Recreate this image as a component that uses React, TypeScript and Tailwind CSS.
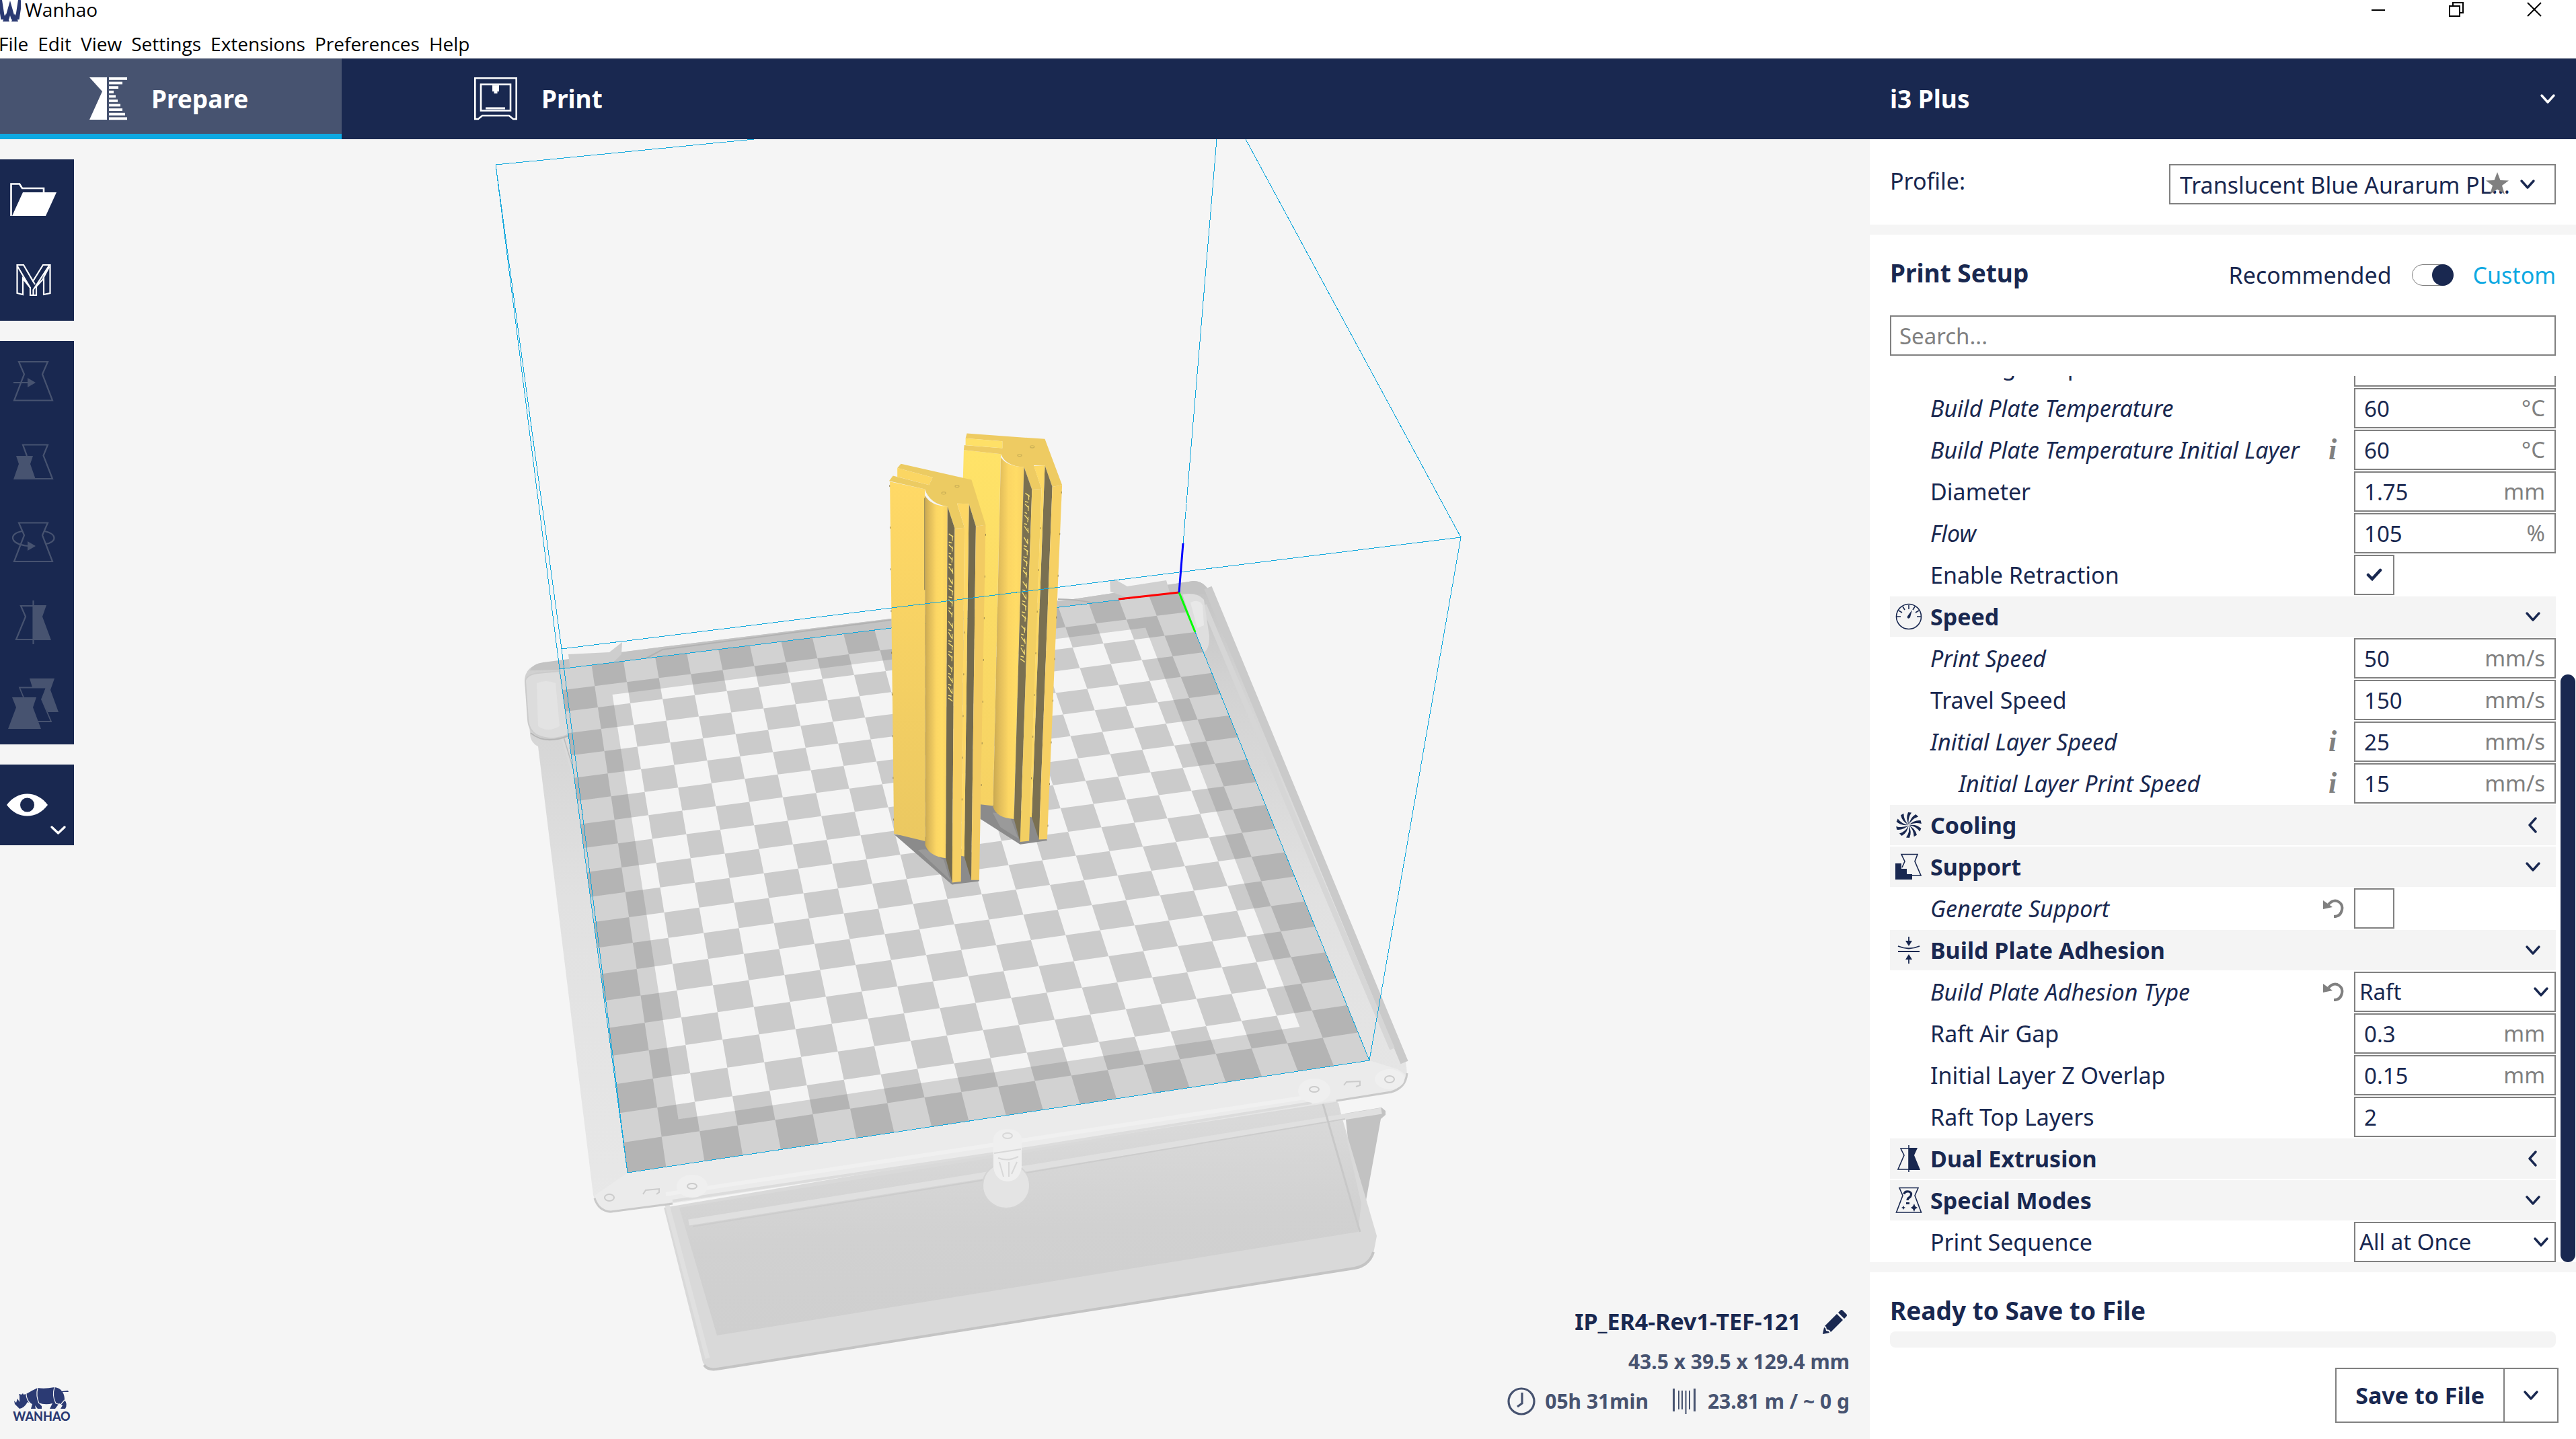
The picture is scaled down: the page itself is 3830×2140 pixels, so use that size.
import React from "react";

const NAVY = "#192850";

/* ---------- small shared glyphs ---------- */

function Chevron({ dir = "down", className = "" }: { dir?: "down" | "left"; className?: string }) {
  return (
    <svg viewBox="0 0 24 24" className={`size-6 shrink-0 ${className}`} fill="none" stroke="currentColor" strokeWidth="3.4" strokeLinecap="round" strokeLinejoin="round" aria-hidden="true">
      {dir === "down" ? <path d="M3 7 L12 17 L21 7" /> : <path d="M16 2 L7 12 L16 22" />}
    </svg>
  );
}

/* ---------- title bar and menu ---------- */

const menus = ["File", "Edit", "View", "Settings", "Extensions", "Preferences", "Help"];

function WindowFrame() {
  return (
    <div className="shrink-0 bg-white text-black font-['Open_Sans','Noto_Sans',sans-serif] text-[28px]">
      <div className="flex h-11 items-start justify-between">
        <div className="flex items-start gap-1.5">
          <svg viewBox="0 0 31 34" className="h-[34px] w-[31px]" aria-hidden="true">
            <path d="M0 0 L4 26 L11 26 L15 12 L19 26 L26 26 L30 0" fill="none" stroke="#2b3a73" strokeWidth="6" />
            <path d="M4 32 L9 20 L14 32Z M17 32 L22 20 L27 32Z" fill="#2b3a73" />
          </svg>
          <span className="leading-7">Wanhao</span>
        </div>
        <div className="flex h-7 pr-1">
          {["Minimize", "Restore", "Close"].map((name) => (
            <button key={name} aria-label={name} className="flex w-[116px] items-center justify-center">
              <svg viewBox="0 0 22 22" className="size-[22px]" fill="none" stroke="#000" strokeWidth="2" aria-hidden="true">
                {name === "Minimize" && <path d="M1 12 H21" />}
                {name === "Restore" && <path d="M1 6 H16 V21 H1Z M6 6 V1 H21 V16 H16" />}
                {name === "Close" && <path d="M1 1 L21 21 M21 1 L1 21" />}
              </svg>
            </button>
          ))}
        </div>
      </div>
      <nav className="-ml-0.5 flex h-[43px] items-center gap-[14px] border-b border-[#e8e8e8] leading-10">
        {menus.map((m) => (
          <button key={m} className="leading-10">
            {m}
          </button>
        ))}
      </nav>
    </div>
  );
}

/* ---------- stage bar ---------- */

const sliceBars = [27, 20, 14, 7, 10, 13, 17, 20, 24, 27];

function StageBar() {
  return (
    <header className="flex h-[120px] shrink-0 bg-[#192850] text-[37px] font-bold text-white">
      <button className="flex w-[508px] items-center border-b-8 border-[#0ea9e2] bg-[#475370] pt-2 pl-[133px]">
        <svg viewBox="0 0 56 64" className="h-16 w-14" fill="#fff" aria-hidden="true">
          <path d="M0 0 H26 V63 H0 L19 21Z" />
          {sliceBars.map((w, i) => (
            <rect key={i} x="29" y={i * 6.6} width={w} height="3.8" />
          ))}
        </svg>
        <span className="pl-9">Prepare</span>
      </button>
      <button className="flex items-center pl-[197px]">
        <svg viewBox="0 0 64 64" className="size-16" fill="none" stroke="#fff" strokeWidth="2.6" aria-hidden="true">
          <path d="M1.3 1.3 H62.7 V62 L58 62 L52 57 H12 L6 62 H1.3Z" />
          <path d="M10 10.5 H54 V49.5 H10Z" />
          <path d="M27 12 H37 V21 H34.500 V24 H29.500 V21 H27Z" fill="#fff" stroke="none" />
          <path d="M17 46 H46" strokeWidth="3" />
        </svg>
        <span className="pl-9">Print</span>
      </button>
      <button className="ml-auto flex w-[1050px] items-center justify-between pr-[30px] pl-[30px]">
        i3 Plus
        <Chevron />
      </button>
    </header>
  );
}

/* ---------- left tool column ---------- */

const toolStroke = { fill: "none", stroke: "#475370", strokeWidth: 2.2 };

function ToolButton({ label, children, disabled }: { label: string; children: React.ReactNode; disabled?: boolean }) {
  return (
    <button aria-label={label} disabled={disabled} className="block h-[120px] w-[110px] bg-[#192850]">
      <svg viewBox="0 0 110 120" className="size-full" aria-hidden="true">
        {children}
      </svg>
    </button>
  );
}

function Toolbar() {
  return (
    <div className="relative flex w-[110px] flex-col gap-[30px] pt-[30px]">
      <div>
        <ToolButton label="Open File">
          <path d="M16.500 84 V36.500 H29 L33 43 H65 V50" fill="none" stroke="#fff" strokeWidth="2.6" />
          <path d="M34 49 H84 L68 84 H18Z" fill="#fff" />
        </ToolButton>
        <ToolButton label="Marketplace">
          <path
            d="M25.500 37 H35 L49 61 L64 37 H74.500 V79 L65 81 V57 L54 69 V82 H45 V71 L34 57 V81 L25.500 79Z M26 39 L45 71 M73 38 L49.500 74 V82 M49 61 L52 66 M64 57 L73 40"
            fill="none"
            stroke="#fff"
            strokeWidth="2.2"
          />
        </ToolButton>
      </div>
      <div>
        <ToolButton label="Move" disabled>
          <path d="M28 31 H71 L63 49.500 L78 88.500 H21 L36 49.500Z M20 62 H42" {...toolStroke} />
          <path d="M41 55 L53 62 L41 69Z" fill="#475370" />
        </ToolButton>
        <ToolButton label="Scale" disabled>
          <path d="M40 51 L34 34.500 H71 L64.500 50.500 L78 85 H52" {...toolStroke} />
          <path d="M24 51 H49 L45 63 L53 86 H20 L28 63Z" fill="#475370" />
        </ToolButton>
        <ToolButton label="Rotate" disabled>
          <path d="M28 30.500 H71 L63 49 L78 88 H21 L36 49Z M33 43 C13 46 13 62 42 65 M66 43 C85 47 85 59 68 62" {...toolStroke} />
          <path d="M41 58 L53 65 L41 72Z" fill="#475370" />
        </ToolButton>
        <ToolButton label="Mirror" disabled>
          <path d="M49 34 H31 L38 50 L24 84 H49 M49.500 26 V91" {...toolStroke} />
          <path d="M49 33 H69 L63 50 L76 85 H49Z" fill="#475370" />
        </ToolButton>
        <ToolButton label="Multiply" disabled>
          <path d="M35 50 L29 35.500 H69 L62 53 L76 86 H56" {...toolStroke} strokeWidth={1.8} />
          <path d="M44 22 H81 L75 39 L87 72 H71 L62 54 L68 35 H48Z M18 50 H54 L49 65 L61 97 H12 L24 65Z" fill="#475370" />
        </ToolButton>
      </div>
      <ToolButton label="View Mode">
        <path d="M10 60 C26 38 55 38 71 60 C55 82 26 82 10 60Z" fill="#fff" />
        <circle cx="40.500" cy="60" r="10.500" fill={NAVY} />
        <path d="M77 93 L86.500 102 L96 93" fill="none" stroke="#fff" strokeWidth="3.4" strokeLinecap="round" strokeLinejoin="round" />
      </ToolButton>
    </div>
  );
}

/* ---------- 3D scene ---------- */

type P = [number, number];

const bedBackRight: P = [1753, 881];
const bedBackLeft: P = [832, 995];
const bedFrontLeft: P = [933, 1744];
const bedFrontRight: P = [2036, 1577];
const CELLS = 20;

/* Maps bed coordinates (0..20 on each axis) to scene points by a projective transform. */
function makeProjector(p0: P, p1: P, p2: P, p3: P) {
  const dx1 = p1[0] - p2[0];
  const dx2 = p3[0] - p2[0];
  const sx = p0[0] - p1[0] + p2[0] - p3[0];
  const dy1 = p1[1] - p2[1];
  const dy2 = p3[1] - p2[1];
  const sy = p0[1] - p1[1] + p2[1] - p3[1];
  const det = dx1 * dy2 - dx2 * dy1;
  const g = (sx * dy2 - dx2 * sy) / det;
  const h = (dx1 * sy - sx * dy1) / det;
  const a = p1[0] - p0[0] + g * p1[0];
  const b = p3[0] - p0[0] + h * p3[0];
  const d = p1[1] - p0[1] + g * p1[1];
  const e = p3[1] - p0[1] + h * p3[1];
  return (i: number, j: number) => {
    const u = i / CELLS;
    const v = j / CELLS;
    const w = g * u + h * v + 1;
    return `${((a * u + b * v + p0[0]) / w).toFixed(1)} ${((d * u + e * v + p0[1]) / w).toFixed(1)}`;
  };
}

const project = makeProjector(bedBackRight, bedBackLeft, bedFrontLeft, bedFrontRight);
const quad = (i0: number, j0: number, i1: number, j1: number) =>
  `M${project(i0, j0)}L${project(i1, j0)}L${project(i1, j1)}L${project(i0, j1)}Z`;

let darkCells = "";
for (let i = 0; i < CELLS; i++) {
  for (let j = 0; j < CELLS; j++) {
    if ((i + j) % 2 === 0) darkCells += quad(i, j, i + 1, j + 1);
  }
}

/* Engraved lettering along a blade: a jittery run of short strokes. */
function engraving(x0: number, y0: number, x1: number, y1: number) {
  let d = "";
  const n = 46;
  for (let k = 0; k < n; k++) {
    if (k % 12 === 11) continue;
    const t = k / n;
    const x = x0 + (x1 - x0) * t;
    const y = y0 + (y1 - y0) * t;
    const s = ((k * 7) % 5) - 2;
    d += k % 3 === 0 ? `M${x} ${y}l${15 - s} ${14 + s * 2}` : k % 3 === 1 ? `M${x + 14} ${y - 6}l${-s} 16` : `M${x} ${y + 3}l${11 + s} 3`;
  }
  return d;
}

function Model() {
  return (
    <g transform="translate(1250 600) scale(.3827 .4847)">
      <path d="M543 1225 V1275 L697 1353 L802 1341 L770 1260Z M207 1322 L432 1476 L538 1466 L520 1380 L330 1330Z" fill="#8b8b8b" />
      <path d="M590 1255 L655 1262 L690 1335 L620 1300Z M300 1370 L330 1368 L400 1400 L425 1462Z" fill="#9a9a9a" />

      <path d="M478 143 L622 155 L592 1235 L543 1230 L556 380 L475 230Z" fill="url(#faceR)" />
      <path d="M478 143 L480 128 L628 137 V116 L485 107 L490 92 L793 109 L860 250 L822 256 L793 190 H750 L780 262 L743 264 L712 195 Q640 192 622 155Z" fill="#eecb62" />
      <path d="M485 107 L628 116 V137 L485 128Z" fill="#fee067" />
      <path d="M622 165 Q645 193 712 195 L673 1275 Q605 1272 592 1238Z" fill="url(#cyl)" />
      <path d="M712 195 L743 264 L697 1345 L673 1275Z M793 190 L822 256 L770 1338 L742 1270Z" fill="#7a7051" />
      <path d="M743 264 L780 262 L732 1342 L697 1345Z" fill="#f2cf62" />
      <path d="M750 192 L793 190 L742 1270 L734 1268 L780 262Z" fill="#fdd965" />
      <path d="M822 256 L860 250 L802 1337 L770 1338Z" fill="#f6d064" />

      <path d="M191 240 L327 263 L328 1343 L207 1320Z" fill="url(#faceL)" />
      <path d="M188 238 L203 222 L343 250 L357 227 L220 198 L234 185 L508 234 L563 373 L525 377 L498 308 L452 307 L481 381 L443 384 L415 316 Q345 308 327 263Z" fill="#eccb62" />
      <path d="M220 198 L357 227 L343 250 L220 225Z" fill="#fbd663" />
      <path d="M327 282 Q350 314 415 316 L408 1395 Q345 1390 328 1355Z" fill="url(#cyl)" />
      <path d="M415 316 L443 384 L433 1470 L408 1395Z M498 308 L525 377 L507 1462 L480 1390Z" fill="#736a4e" />
      <path d="M443 384 L481 381 L467 1467 L433 1470Z" fill="#f6d064" />
      <path d="M452 307 L498 308 L480 1390 L468 1388 L481 381Z" fill="#fdd765" />
      <path d="M525 377 L563 373 L538 1462 L507 1462Z" fill="#f2cb62" />

      <g fill="#fbdc66" stroke="#cdb057" strokeWidth="3">
        <ellipse cx="400" cy="275" rx="8" ry="3" />
        <ellipse cx="452" cy="254" rx="8" ry="3" />
        <ellipse cx="695" cy="159" rx="8" ry="3" />
        <ellipse cx="744" cy="133" rx="8" ry="3" />
      </g>
      <g fill="none" stroke="#fbe274" strokeWidth="3">
        <path d={engraving(420, 400, 418, 915)} />
        <path d={engraving(717, 275, 698, 795)} />
      </g>
      <g fill="none" stroke="#8a7a4a" strokeWidth="2" strokeDasharray="6 122">
        <path d="M190 250 L206 1310 M563 400 L545 1240 M480 700 L470 1290 M858 270 L803 1330 M775 380 L736 1260" />
      </g>
      <path d="M326 290 V572" stroke="#8f8256" strokeWidth="3" />
    </g>
  );
}

function Scene() {
  return (
    <svg viewBox="0 207 2780 1933" preserveAspectRatio="xMinYMin slice" className="absolute inset-0 size-full" role="img" aria-label="Build plate with two models">
      <defs>
        <linearGradient id="faceL" x1="0" y1="0" x2="0" y2="1">
          <stop offset="0" stopColor="#ffd966" />
          <stop offset="1" stopColor="#ebc861" />
        </linearGradient>
        <linearGradient id="faceR" x1="0" y1="0" x2="0" y2="1">
          <stop offset="0" stopColor="#ffe368" />
          <stop offset="1" stopColor="#f6d263" />
        </linearGradient>
        <linearGradient id="cyl">
          <stop offset="0" stopColor="#c9a850" />
          <stop offset=".2" stopColor="#e0bc5a" />
          <stop offset=".5" stopColor="#fcd664" />
          <stop offset=".75" stopColor="#ffdc66" />
          <stop offset="1" stopColor="#f9d364" />
        </linearGradient>
        <linearGradient id="side" x1="0" y1="0" x2="0" y2="1">
          <stop offset="0" stopColor="#c3c3c3" />
          <stop offset=".16" stopColor="#d2d2d2" />
          <stop offset=".5" stopColor="#e1e1e1" />
          <stop offset="1" stopColor="#e8e8e8" />
        </linearGradient>
        <linearGradient id="drawer" x1="0" y1="0" x2=".15" y2="1">
          <stop offset="0" stopColor="#dddddd" />
          <stop offset=".6" stopColor="#d1d1d1" />
          <stop offset="1" stopColor="#cfcfcf" />
        </linearGradient>
      </defs>

      {/* storage drawer under the plate */}
      <path d="M2000 1656 L2054 1647 L2060 1652 V1658 L2053 1664 L2031 1785 L2019 1834Z" fill="#c2c2c2" />
      <path d="M987 1796 L1985 1627 L2031 1783 L2047 1838 L2042 1864 Q2036 1884 2010 1888 L1066 2037 Q1050 2038 1045 2026Z" fill="#d9d9d9" />
      <path d="M1010 1796 L1990 1640 L2024 1790 L2019 1832 L1450 1924 L1066 1986Z" fill="url(#drawer)" />
      <path d="M1047 2030 Q1052 2038 1066 2036 L2014 1886 Q2036 1882 2042 1862" fill="none" stroke="#c4c4c4" strokeWidth="4" />
      <path d="M1024 1818 L1450 1750 L2054 1652" fill="none" stroke="#e0e0e0" strokeWidth="9" />
      <path d="M1030 1824 L1450 1757 L2000 1664" fill="none" stroke="#cccccc" strokeWidth="2" />
      <path d="M1955 1600 L2022 1832" fill="none" stroke="#c8c8c8" strokeWidth="3" />
      <path d="M985 1765 L1052 2020" fill="none" stroke="#e0e0e0" strokeWidth="7" />

      {/* plate body */}
      <path
        d="M780 1013 Q780 990 808 986 L906 972 L985 962 L1325 920 L1596 891 L1774 864 Q1792 864 1800 884 L1850 1000 L1990 1340 L2016 1400 L2090 1580 Q2098 1618 2068 1626 L906 1804 Q888 1800 882 1777 L800 1110 Q788 1104 788 1090Z"
        fill="url(#side)"
      />
      <path d="M788 997 Q792 987 808 985 L985 962 L1325 920 L1596 891 L1774 864 Q1792 864 1800 884 L1753 882 L832 996Z" fill="#c3c3c3" />
      <path d="M953 983 L985 966 L1325 922 M1573 891 Q1600 891 1627 897" fill="none" stroke="#b2b2b2" strokeWidth="2" />
      <path d="M1796 874 L2088 1580" fill="none" stroke="#cacaca" strokeWidth="12" />
      <path d="M1790 900 L2070 1560" fill="none" stroke="#d6d6d6" strokeWidth="8" />
      <path d="M822 1040 L878 1230" fill="none" stroke="#dadada" strokeWidth="9" />
      <path d="M820 1036 L880 1236" fill="none" stroke="#bdbdbd" strokeWidth="1.500" />
      <path d="M933 1744 L2036 1577 L2078 1590 L2092 1600 Q2092 1620 2068 1624 L906 1802 Q890 1796 884 1778Z" fill="#ebebeb" />
      <path d="M1000 1786 L1500 1712 L1950 1640" fill="none" stroke="#dcdcdc" strokeWidth="4" />
      <path d="M990 1776 L1480 1702 L1940 1632" fill="none" stroke="#f0f0f0" strokeWidth="6" />
      <path d="M884 1782 Q890 1801 908 1802 L1000 1790 M1987 1637 L2068 1624 Q2090 1618 2092 1596" fill="none" stroke="#c9c9c9" strokeWidth="3" />

      {/* corner foot and clips */}
      <path d="M781 1012 Q784 1003 800 1001 L832 998 L846 1092 Q820 1104 798 1093 Q786 1086 785 1070Z" fill="#dcdcdc" stroke="#cbcbcb" strokeWidth="2" />
      <path d="M798 1016 Q812 1010 826 1016 L832 1080 Q814 1090 800 1080Z" fill="#e3e3e3" />
      <path d="M789 1090 Q810 1108 846 1094" fill="none" stroke="#b6b6b6" strokeWidth="2" />
      <path d="M845 973 L906 970 L925 955 L924 973 L906 991 L848 996Z" fill="#cecece" />
      <path d="M1650 863 L1660 863 L1676 872 L1734 863 L1740 884 L1680 890 L1651 880Z" fill="#d0d0d0" />
      <path d="M1758 884 Q1780 880 1790 892 L1798 946 Q1798 966 1790 970 L1777 940Z" fill="#dedede" />
      <path d="M1770 896 Q1782 890 1788 900 L1790 930 L1780 934Z" fill="#e8e8e8" />

      {/* checkered plate */}
      <path d={quad(0, 0, CELLS, CELLS)} fill="#f4f4f4" />
      <path d={darkCells} fill="#cbcbcb" />
      <path d={quad(0, 0, CELLS, CELLS) + quad(1.5, 1.5, CELLS - 1.5, CELLS - 1.5)} fillRule="evenodd" fill="#767676" fillOpacity=".27" />

      {/* front hardware */}
      <g fill="#efefef">
        <ellipse cx="1029" cy="1764" rx="23" ry="17" />
        <ellipse cx="1954" cy="1622" rx="24" ry="18" />
        <ellipse cx="2066" cy="1605" rx="22" ry="15" />
      </g>
      <g fill="none" stroke="#cbcbcb" strokeWidth="2">
        <ellipse cx="906" cy="1781" rx="7" ry="5" />
        <ellipse cx="1029" cy="1764" rx="7" ry="4" />
        <ellipse cx="1954" cy="1620" rx="7" ry="4" />
        <ellipse cx="2066" cy="1605" rx="7" ry="5" />
        <path d="M956 1776 L960 1770 L980 1768 V1773 L976 1776" />
        <path d="M1998 1614 L2002 1609 L2022 1608 V1614 L2016 1616" />
      </g>
      <ellipse cx="1496" cy="1763" rx="35" ry="34" fill="#e4e4e4" stroke="#d4d4d4" strokeWidth="2" />
      <path d="M1477 1694 Q1478 1680 1498 1679 Q1518 1680 1519 1694 V1736 Q1516 1756 1498 1757 Q1480 1756 1477 1736Z" fill="#efefef" />
      <g fill="none" stroke="#d8d8d8" strokeWidth="2">
        <ellipse cx="1498" cy="1689" rx="7" ry="4" />
        <path d="M1478 1715 L1518 1709 M1484 1722 Q1498 1728 1514 1720 M1486 1728 L1492 1750 M1500 1728 V1750 M1512 1728 L1504 1746" />
      </g>

      {/* build volume behind the models */}
      <g fill="none" stroke="#12a7dc" strokeWidth="1" shapeRendering="crispEdges">
        <path d="M1753 881 L832 995 L933 1744 L2036 1577 Z" />
        <path d="M832 995 L737 245 L1121 207 M1753 881 L1809 207" />
      </g>
      <Model />
      <g fill="none" stroke="#12a7dc" strokeWidth="1" shapeRendering="crispEdges">
        <path d="M933 1744 L835 965 L737 245 M835 965 L2172 799 L2036 1577 M2172 799 L1852 207" />
      </g>
      <g fill="none" strokeWidth="3">
        <path d="M1753 881 L1663 891" stroke="#f00" />
        <path d="M1753 881 L1777 940" stroke="#0f0" />
        <path d="M1753 881 L1759 808" stroke="#00f" />
      </g>
    </svg>
  );
}

function Logo() {
  return (
    <div className="relative mb-6 ml-5 flex w-[84px] flex-col items-center text-[#2b3a73]">
      <svg viewBox="0 0 82 34" className="h-[34px] w-[82px]" aria-hidden="true">
        <path
          d="M0 21 L3 24 L5 18 L8 23 L8 14 L7 11 L11 12 L13 10 L14 12 L18 11 Q26 6 35 2 Q45 4 60 1 Q68 2 71 7 L80 6 L81 8 L72 8 Q75 13 75 20 Q80 26 76 33 H69 L72 28 L67 25 L61 33 H53 L57 25 Q46 28 36 24 L41 29 V33 H35 L31 28 L32 33 H25 L27 26 L20 23 Q15 32 8 33 L1 26Z"
          fill="currentColor"
        />
        <path d="M18 11 Q18 20 25 26 M35 2 Q32 14 37 25 M60 1 Q56 14 62 25 L69 27 L75 20" fill="none" stroke="#f5f5f5" strokeWidth="1.200" />
      </svg>
      <span className="font-['Lato',sans-serif] text-[18px] leading-5 font-black">WANHAO</span>
    </div>
  );
}

function JobInfo() {
  return (
    <div className="relative flex flex-col items-end pr-[30px] pb-[27px] text-[30px] leading-[59px] font-bold text-[#475370]">
      <div className="flex items-center gap-8 pr-1 text-[34px] text-[#192850]">
        IP_ER4-Rev1-TEF-121
        <button aria-label="Rename job">
          <svg viewBox="0 0 36 36" className="size-9" fill="currentColor" aria-hidden="true">
            <path d="M26 1 Q28 -1 30 1 L35 6 Q37 8 35 10 L32 13 L23 4Z M21 6 L30 15 L12 33 L10 30 L6 29 L5 25 L3 24Z M2 26 L4 27 L5 31 L9 32 L10 34 L0 36Z" />
          </svg>
        </button>
      </div>
      <div>43.5 x 39.5 x 129.4 mm</div>
      <div className="flex items-center">
        <svg viewBox="0 0 42 42" className="size-[42px]" fill="none" stroke="currentColor" strokeWidth="3.200" aria-hidden="true">
          <circle cx="21" cy="21" r="19" />
          <path d="M22 8 V24 L15 29" />
        </svg>
        <span className="pl-[14px]">05h 31min</span>
        <svg viewBox="0 0 34 40" className="mr-[18px] ml-9 h-10 w-[34px]" fill="none" stroke="currentColor" aria-hidden="true">
          <path d="M1.500 1 V35 M32.500 1 V35" strokeWidth="3" />
          <path d="M9 4 V32 M14 4 V32 M19.500 4 V39 M25 4 V32" strokeWidth="2" />
        </svg>
        <span>23.81 m / ~ 0 g</span>
      </div>
    </div>
  );
}

/* ---------- settings panel ---------- */

const catIcons: Record<string, React.ReactNode> = {
  Speed: (
    <g fill="none" stroke={NAVY} strokeWidth="1.600">
      <circle cx="20" cy="20" r="18.500" />
      <path d="M20 3 V9 M2 20 H8 M32 20 H38 M11 5 L14 10 M29 5 L26 10 M5 11 L10 14 M35 11 L30 14" />
      <path d="M25 10 L22 21 Q20 24 18 22 Q17 20 19 18Z" fill={NAVY} stroke="none" />
    </g>
  ),
  Cooling: (
    <g fill={NAVY}>
      {[0, 36, 72, 108, 144, 180, 216, 252, 288, 324].map((a) => (
        <path key={a} transform={`rotate(${a} 20 20)`} d="M20 19.500 Q15 10 19 1 L24 1.500 Q18 10 20 19.500Z" />
      ))}
    </g>
  ),
  Support: (
    <g>
      <path d="M10 21 L14 12 L9 1.500 H33 L29 12 L38 33 H24" fill="none" stroke={NAVY} strokeWidth="1.600" />
      <path d="M0 15 H9 V23 H17 V31 H25 V39 H0Z" fill={NAVY} />
    </g>
  ),
  "Build Plate Adhesion": (
    <g>
      <path d="M20 0 V9 M4 14 Q20 21 36 14 M4 22 H36 M20 31 V40" fill="none" stroke={NAVY} strokeWidth="1.800" />
      <path d="M15 6 H25 L20 14Z M15 34 H25 L20 26Z" fill={NAVY} />
    </g>
  ),
  "Dual Extrusion": (
    <g>
      <path d="M20 5 H8 L13 15 L4 36 H20 M20 0 V40" fill="none" stroke={NAVY} strokeWidth="1.600" />
      <path d="M20 4 H33 L28 15 L37 37 H20Z" fill={NAVY} />
    </g>
  ),
  "Special Modes": (
    <g>
      <path d="M6 1.500 H34 L29 13 L38.500 38 H1.500 L11 13Z" fill="none" stroke={NAVY} strokeWidth="1.600" />
      <path d="M13 11 Q14 6 20 7 Q26 9 22 15 Q18 17 18 20" fill="none" stroke={NAVY} strokeWidth="3.200" />
      <path d="M16 23 H21 V26 H16Z M28 25 L29.500 29 L33 31 L29.500 33 L28 37 L26 33 L23 31 L26 29Z M12 28 L13 30 L15 31 L13 32 L12 34 L11 32 L9 31 L11 30Z" fill={NAVY} />
    </g>
  ),
};

type Setting = {
  label: string;
  value?: string;
  unit?: string;
  kind?: "check" | "select" | "category";
  italic?: boolean;
  indent?: boolean;
  info?: boolean;
  reset?: boolean;
  on?: boolean;
};

const settings: Setting[] = [
  { label: "Printing Temperature", value: "210", unit: "°C", info: true },
  { label: "Build Plate Temperature", value: "60", unit: "°C", italic: true },
  { label: "Build Plate Temperature Initial Layer", value: "60", unit: "°C", italic: true, info: true },
  { label: "Diameter", value: "1.75", unit: "mm" },
  { label: "Flow", value: "105", unit: "%", italic: true },
  { label: "Enable Retraction", kind: "check", on: true },
  { label: "Speed", kind: "category", on: true },
  { label: "Print Speed", value: "50", unit: "mm/s", italic: true },
  { label: "Travel Speed", value: "150", unit: "mm/s" },
  { label: "Initial Layer Speed", value: "25", unit: "mm/s", italic: true, info: true },
  { label: "Initial Layer Print Speed", value: "15", unit: "mm/s", italic: true, info: true, indent: true },
  { label: "Cooling", kind: "category" },
  { label: "Support", kind: "category", on: true },
  { label: "Generate Support", kind: "check", italic: true, reset: true },
  { label: "Build Plate Adhesion", kind: "category", on: true },
  { label: "Build Plate Adhesion Type", kind: "select", value: "Raft", italic: true, reset: true },
  { label: "Raft Air Gap", value: "0.3", unit: "mm" },
  { label: "Initial Layer Z Overlap", value: "0.15", unit: "mm" },
  { label: "Raft Top Layers", value: "2" },
  { label: "Dual Extrusion", kind: "category" },
  { label: "Special Modes", kind: "category", on: true },
  { label: "Print Sequence", kind: "select", value: "All at Once" },
];

function ResetIcon() {
  return (
    <svg viewBox="0 0 32 30" className="h-[30px] w-8" aria-hidden="true">
      <path d="M8 9 Q14 2 21 4 Q30 8 28 17 Q26 27 16 27" fill="none" stroke="#808080" strokeWidth="4" />
      <path d="M0 3 L0 16 L14 13Z" fill="#808080" />
    </svg>
  );
}

function SettingRow({ s }: { s: Setting }) {
  const id = s.label.toLowerCase().replace(/\s+/g, "-");
  if (s.kind === "category") {
    return (
      <button aria-expanded={!!s.on} className="flex h-[60px] w-full shrink-0 items-center bg-[#f4f4f4] pr-[22px] pl-2 text-left font-bold">
        <svg viewBox="0 0 40 40" className="mr-3 size-10" aria-hidden="true">
          {catIcons[s.label]}
        </svg>
        <span className="flex-1">{s.label}</span>
        <Chevron dir={s.on ? "down" : "left"} />
      </button>
    );
  }
  return (
    <div className="flex h-[60px] shrink-0 items-center">
      <label htmlFor={id} className={`flex-1 ${s.indent ? "pl-[102px]" : "pl-[60px]"} ${s.italic ? "italic" : ""}`}>
        {s.label}
      </label>
      <div className="flex w-[58px] items-center pl-3">
        {s.info && (
          <button aria-label={`${s.label} is linked`} className="ml-1 h-11 w-5 font-['Liberation_Serif',serif] text-[44px] leading-10 font-bold text-[#808080] italic">
            i
          </button>
        )}
        {s.reset && (
          <button aria-label={`Reset ${s.label}`}>
            <ResetIcon />
          </button>
        )}
      </div>
      <div className="relative h-full w-[300px] text-[33px]">
        {s.kind === "check" && (
          <>
            <input id={id} type="checkbox" defaultChecked={s.on} className="peer block size-[60px] appearance-none border-2 border-[#808080] bg-white" />
            <svg viewBox="0 0 24 20" className="pointer-events-none absolute top-5 left-[18px] hidden h-5 w-6 peer-checked:block" aria-hidden="true">
              <path d="M3 10 L9 16 L21 3" fill="none" stroke={NAVY} strokeWidth="4.500" strokeLinecap="round" />
            </svg>
          </>
        )}
        {s.kind === "select" && (
          <>
            <select id={id} className="size-full appearance-none border-2 border-[#808080] bg-white pl-1.5">
              <option>{s.value}</option>
            </select>
            <Chevron className="pointer-events-none absolute top-[18px] right-[10px]" />
          </>
        )}
        {!s.kind && (
          <>
            <input id={id} defaultValue={s.value} className="size-full border-2 border-[#808080] bg-white pr-28 pl-[13px]" />
            <span className="pointer-events-none absolute inset-y-0 right-4 flex items-center text-[#808080]">{s.unit}</span>
          </>
        )}
      </div>
    </div>
  );
}

function SettingsPanel() {
  return (
    <aside className="flex w-[1050px] shrink-0 flex-col gap-[15px] text-[34px]">
      <section className="flex h-[127px] items-start justify-between bg-white pr-[30px] pl-[30px]">
        <label htmlFor="profile" className="pt-10 leading-[44px]">
          Profile:
        </label>
        <div className="relative mt-[37px] h-[60px] w-[575px]">
          <select id="profile" className="size-full appearance-none border-2 border-[#808080] bg-white pt-0.5 pl-3.5">
            <option>Translucent Blue Aurarum PL...</option>
          </select>
          <svg viewBox="0 0 34 34" className="pointer-events-none absolute top-3 right-[70px] size-[34px]" fill="#808080" aria-hidden="true">
            <path d="M17 0 L21.500 12 L34 12.500 L24 20 L28 33 L17 25.500 L6 33 L10 20 L0 12.500 L12.500 12Z" />
          </svg>
          <Chevron className="pointer-events-none absolute top-[18px] right-[30px]" />
        </div>
      </section>

      <section className="flex min-h-0 flex-1 flex-col bg-white pl-[30px]">
        <div className="flex h-[120px] shrink-0 items-center pr-[30px]">
          <h2 className="flex-1 pb-1.5 text-[37px] font-bold">Print Setup</h2>
          <label htmlFor="mode">Recommended</label>
          <span className="relative mx-[30px] h-8 w-[61px]">
            <input id="mode" type="checkbox" role="switch" aria-label="Custom settings" defaultChecked className="peer block size-full appearance-none rounded-full border border-[#808080] bg-white" />
            <span className="pointer-events-none absolute top-0 left-0 size-8 rounded-full bg-[#192850] peer-checked:left-[30px]" />
          </span>
          <span className="text-[#0ea9e2]">Custom</span>
        </div>
        <div className="shrink-0 pr-[30px]">
          <input aria-label="Search settings" placeholder="Search..." className="block h-[60px] w-full border-2 border-[#808080] px-3 text-[33px] placeholder:text-[#808080]" />
        </div>
        <div className="mt-[30px] flex min-h-0 flex-1">
          <div className="flex min-w-0 flex-1 flex-col justify-end gap-0.5 overflow-hidden">
            {settings.map((s) => (
              <SettingRow key={s.label} s={s} />
            ))}
          </div>
          <div className="flex w-[30px] flex-col justify-end pl-[7px]">
            <div className="h-[874px] w-[22px] rounded-full bg-[#192850]" />
          </div>
        </div>
      </section>

      <section className="h-[248px] shrink-0 bg-white px-[30px] pt-[34px]">
        <h2 className="text-[37px] leading-[46px] font-bold">Ready to Save to File</h2>
        <div role="progressbar" aria-label="Slicing progress" className="mt-2 h-6 rounded-lg bg-[#f4f4f4]" />
        <div className="mt-[30px] -mr-1 flex justify-end">
          <button className="h-[82px] border-2 border-[#808080] px-[28px] text-[34px] font-bold">Save to File</button>
          <button aria-label="More save options" className="flex h-[82px] w-[80px] items-center justify-center border-2 border-l-0 border-[#808080]">
            <Chevron />
          </button>
        </div>
      </section>
    </aside>
  );
}

export default function App() {
  return (
    <div className="flex h-screen flex-col overflow-hidden bg-[#f5f5f5] font-['Noto_Sans',sans-serif] text-[#192850]">
      <WindowFrame />
      <StageBar />
      <div className="flex min-h-0 flex-1">
        <main className="relative flex min-w-0 flex-1 flex-col justify-between">
          <Scene />
          <Toolbar />
          <div className="flex items-end justify-between">
            <Logo />
            <JobInfo />
          </div>
        </main>
        <SettingsPanel />
      </div>
    </div>
  );
}
